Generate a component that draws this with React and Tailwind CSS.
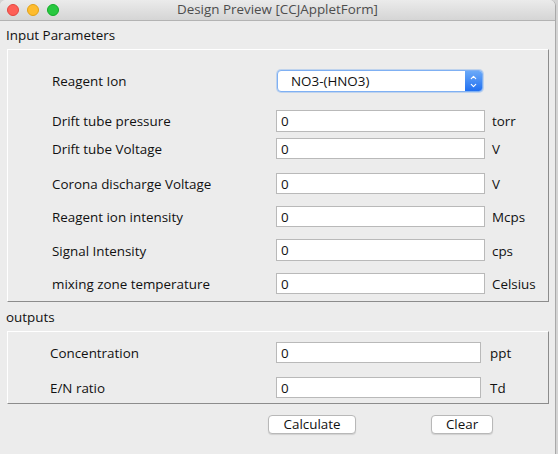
import { ChevronUp, ChevronDown } from "lucide-react";

const inputs = [
  { label: "Drift tube pressure", unit: "torr", mt: "mt-[18px]", h: "h-[22px]" },
  { label: "Drift tube Voltage", unit: "V", mt: "mt-[6px]", h: "h-[21px]" },
  { label: "Corona discharge Voltage", unit: "V", mt: "mt-[14px]", h: "h-[21px]" },
  { label: "Reagent ion intensity", unit: "Mcps", mt: "mt-[12px]", h: "h-[21px]" },
  { label: "Signal Intensity", unit: "cps", mt: "mt-[12px]", h: "h-[22px]" },
  { label: "mixing zone temperature", unit: "Celsius", mt: "mt-[12px]", h: "h-[21px]" },
];

const outputs = [
  { label: "Concentration", unit: "ppt", mt: "mt-[10px]" },
  { label: "E/N ratio", unit: "Td", mt: "mt-[14px]" },
];

function Field({ h = "h-[21px]", w = "w-[209px]" }) {
  return (
    <div
      className={`${h} ${w} flex items-center border border-[#b9b9b9] bg-white pl-[4px] text-[13.4px] text-[#111]`}
    >
      0
    </div>
  );
}

function MacButton({ children, w }) {
  return (
    <button
      className={`${w} flex h-[19px] items-center justify-center rounded-[4px] border border-[#b8b8b8] bg-white text-[13.4px] text-[#111] shadow-[0_1px_1px_rgba(0,0,0,0.12)]`}
    >
      {children}
    </button>
  );
}

export default function App() {
  return (
    <div
      className="flex h-[454px] w-[558px] overflow-hidden bg-[#d4d4d4]"
      style={{ fontFamily: '"Open Sans", "Noto Sans", sans-serif' }}
    >
      <div className="flex h-[454px] w-[556px] flex-col overflow-hidden rounded-t-[6px] border-r border-[#a9a9a9] bg-[#ececec] text-[#111]">
        {/* title bar */}
        <div className="relative flex h-[21px] shrink-0 items-center justify-center border-b border-[#b3b3b3] bg-gradient-to-b from-[#ebebeb] to-[#d5d5d5]">
          <div className="absolute left-[7px] top-[4px] flex gap-[8px]">
            <span className="h-[12px] w-[12px] rounded-full border border-[#e2463f] bg-[#fe5f57]" />
            <span className="h-[12px] w-[12px] rounded-full border border-[#e1a116] bg-[#febc2e]" />
            <span className="h-[12px] w-[12px] rounded-full border border-[#12ac28] bg-[#28c840]" />
          </div>
          <span className="text-[13.4px] leading-none text-[#4d4d4d]">
            Design Preview [CCJAppletForm]
          </span>
        </div>

        <div className="h-[28px] shrink-0 pl-[6px] pt-[6px] text-[13.4px] leading-[16px]">
          Input Parameters
        </div>

        {/* input panel */}
        <div className="mx-[7px] flex h-[253px] w-[542px] shrink-0 flex-col border border-t-white border-l-white border-r-[#8c8c8c] border-b-[#8c8c8c]">
          <div className="mt-[20px] flex h-[22px] items-center">
            <div className="w-[268px] pl-[44px] pt-[1px] text-[13.4px]">Reagent Ion</div>
            <div className="ml-[1px] flex h-[22px] w-[206px] items-center rounded-[4px] border border-[#7fb0f3] bg-white shadow-[0_0_0_1px_rgba(110,165,240,0.35)]">
              <span className="flex-1 pl-[13px] text-[13.4px]">NO3-(HNO3)</span>
              <span className="flex h-[20px] w-[17px] flex-col items-center justify-center rounded-r-[3px] bg-gradient-to-b from-[#6aa9f8] to-[#1f6ff0] text-white">
                <ChevronUp size={9} strokeWidth={3} className="-mb-[1px]" />
                <ChevronDown size={9} strokeWidth={3} />
              </span>
            </div>
          </div>

          {inputs.map((r) => (
            <div key={r.label} className={`${r.mt} flex items-center`}>
              <div className="w-[268px] pl-[44px] pt-[1px] text-[13.4px]">{r.label}</div>
              <Field h={r.h} />
              <span className="ml-[7px] pt-[1px] text-[13.4px]">{r.unit}</span>
            </div>
          ))}
        </div>

        <div className="h-[29px] shrink-0 pl-[6px] pt-[7px] text-[13.4px] leading-[16px]">
          outputs
        </div>

        {/* output panel */}
        <div className="mx-[7px] flex h-[73px] w-[542px] shrink-0 flex-col border border-t-white border-l-white border-r-[#8c8c8c] border-b-[#8c8c8c]">
          {outputs.map((r) => (
            <div key={r.label} className={`${r.mt} flex items-center`}>
              <div className="w-[268px] pl-[42px] pt-[1px] text-[13.4px]">{r.label}</div>
              <Field w="w-[205px]" />
              <span className="ml-[9px] pt-[1px] text-[13.4px]">{r.unit}</span>
            </div>
          ))}
        </div>

        <div className="mt-[11px] flex pl-[268px]">
          <MacButton w="w-[88px]">Calculate</MacButton>
          <div className="ml-[75px]">
            <MacButton w="w-[62px]">Clear</MacButton>
          </div>
        </div>
      </div>
    </div>
  );
}
